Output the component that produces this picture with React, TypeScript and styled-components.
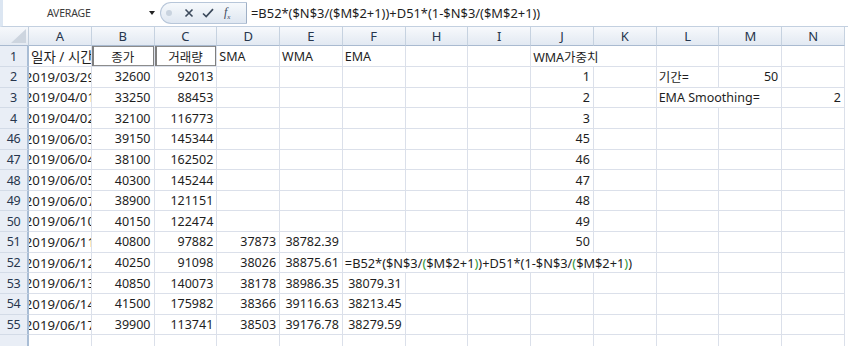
import React from "react";
import styled, { createGlobalStyle } from "styled-components";

const GlobalStyle = createGlobalStyle`
  html, body { margin: 0; padding: 0; background: #ffffff; }
  body { font-family: "Noto Sans", "Noto Sans CJK KR", sans-serif; }
`;

const COLS = ["A", "B", "C", "D", "E", "F", "H", "I", "J", "K", "L", "M", "N"];
const FORMULA = "=B52*($N$3/($M$2+1))+D51*(1-$N$3/($M$2+1))";

type Align = "left" | "right" | "center";
type CellDef = { v: React.ReactNode; align?: Align; span?: number; boxed?: boolean; size?: number };
type RowDef = { n: string; cells: Record<string, CellDef | string> };

const Paren = styled.span`
  color: #2f9a3c;
`;

const coloredFormula = (
  <>
    =B52*($N$3/<Paren>(</Paren>$M$2+1<Paren>)</Paren>)+D51*(1-$N$3/<Paren>(</Paren>$M$2+1<Paren>)</Paren>)
  </>
);

const rows: RowDef[] = [
  {
    n: "1",
    cells: {
      A: { v: "일자 / 시간", align: "left", size: 13.5 },
      B: { v: "종가", align: "center", boxed: true },
      C: { v: "거래량", align: "center", boxed: true },
      D: "SMA",
      E: "WMA",
      F: "EMA",
      J: { v: "WMA가중치", align: "left", span: 2 },
    },
  },
  { n: "2", cells: { A: "2019/03/29", B: "32600", C: "92013", J: "1", L: "기간=", M: "50" } },
  { n: "3", cells: { A: "2019/04/01", B: "33250", C: "88453", J: "2", L: { v: "EMA Smoothing=", span: 2 }, N: "2" } },
  { n: "4", cells: { A: "2019/04/02", B: "32100", C: "116773", J: "3" } },
  { n: "46", cells: { A: "2019/06/03", B: "39150", C: "145344", J: "45" } },
  { n: "47", cells: { A: "2019/06/04", B: "38100", C: "162502", J: "46" } },
  { n: "48", cells: { A: "2019/06/05", B: "40300", C: "145244", J: "47" } },
  { n: "49", cells: { A: "2019/06/07", B: "38900", C: "121151", J: "48" } },
  { n: "50", cells: { A: "2019/06/10", B: "40150", C: "122474", J: "49" } },
  { n: "51", cells: { A: "2019/06/11", B: "40800", C: "97882", D: "37873", E: "38782.39", J: "50" } },
  {
    n: "52",
    cells: {
      A: "2019/06/12",
      B: "40250",
      C: "91098",
      D: "38026",
      E: "38875.61",
      F: { v: coloredFormula, align: "left", span: 5, size: 12.8 },
    },
  },
  { n: "53", cells: { A: "2019/06/13", B: "40850", C: "140073", D: "38178", E: "38986.35", F: "38079.31" } },
  { n: "54", cells: { A: "2019/06/14", B: "41500", C: "175982", D: "38366", E: "39116.63", F: "38213.45" } },
  { n: "55", cells: { A: "2019/06/17", B: "39900", C: "113741", D: "38503", E: "39176.78", F: "38279.59" } },
  { n: "", cells: {} },
];

function normalize(col: string, c: CellDef | string): CellDef {
  if (typeof c !== "string") return c;
  if (col === "A") return { v: c, align: "center", size: 13.2 };
  return { v: c, align: /^[\d.]+$/.test(c) ? "right" : "left" };
}

function App() {
  return (
    <>
      <GlobalStyle />
      <Window>
        <FormulaBar>
          <NameBox>AVERAGE</NameBox>
          <DropArrow />
          <ButtonPill>
            <GhostDot />
            <PillIcon>
              <svg width="10" height="10" viewBox="0 0 10 10">
                <path d="M1.5 1.5 L8.5 8.5 M8.5 1.5 L1.5 8.5" stroke="#3c4a5c" strokeWidth="1.6" />
              </svg>
            </PillIcon>
            <PillIcon>
              <svg width="12" height="10" viewBox="0 0 12 10">
                <path d="M1 5.5 L4.2 8.5 L11 1.2" stroke="#3c4a5c" strokeWidth="1.7" fill="none" />
              </svg>
            </PillIcon>
            <FxLabel>
              f<sub>x</sub>
            </FxLabel>
          </ButtonPill>
          <FormulaText>{FORMULA}</FormulaText>
        </FormulaBar>

        <Sheet>
          <Corner>
            <CornerTriangle />
          </Corner>
          {COLS.map((c) => (
            <ColHead key={c}>{c}</ColHead>
          ))}

          {rows.map((row, ri) => {
            const out: React.ReactNode[] = [<RowHead key={`h${ri}`}>{row.n}</RowHead>];
            let skip = 0;
            COLS.forEach((col) => {
              if (skip > 0) {
                skip--;
                return;
              }
              const raw = row.cells[col];
              if (!raw) {
                out.push(<Cell key={`${ri}${col}`} $align="left" />);
                return;
              }
              const def = normalize(col, raw);
              const span = def.span ?? 1;
              skip = span - 1;
              out.push(
                <Cell key={`${ri}${col}`} $align={def.align ?? "left"} $span={span} $boxed={def.boxed}>
                  <CellText $size={def.size}>{def.v}</CellText>
                </Cell>
              );
            });
            return out;
          })}
        </Sheet>
      </Window>
    </>
  );
}

const Window = styled.div`
  width: 848px;
  height: 346px;
  overflow: hidden;
  background: #ffffff;
  color: #1e1e1e;
`;

const FormulaBar = styled.div`
  height: 27px;
  display: flex;
  align-items: center;
  border-left: 3px solid #dce6f2;
  border-bottom: 1px solid #c3d0e0;
  box-sizing: border-box;
  background: #ffffff;
`;

const NameBox = styled.div`
  width: 144px;
  padding-left: 44px;
  box-sizing: border-box;
  font-size: 10.5px;
  letter-spacing: -0.2px;
  color: #3a3a3a;
`;

const DropArrow = styled.div`
  width: 0;
  height: 0;
  margin-left: 2px;
  border-left: 3px solid transparent;
  border-right: 3px solid transparent;
  border-top: 4px solid #222;
`;

const ButtonPill = styled.div`
  margin-left: 5px;
  width: 87px;
  height: 22px;
  box-sizing: border-box;
  display: flex;
  align-items: center;
  gap: 8px;
  padding-left: 5px;
  border: 1px solid #b7c6d9;
  border-right-color: #9fb0c6;
  border-radius: 12px 0 0 12px;
  background: linear-gradient(#f6f9fc, #dfe7f1);
`;

const GhostDot = styled.div`
  width: 6px;
  height: 6px;
  border-radius: 50%;
  background: #c9d3df;
  margin-right: 4px;
`;

const PillIcon = styled.div`
  display: flex;
  align-items: center;
`;

const FxLabel = styled.div`
  font-family: "Liberation Serif", serif;
  font-style: italic;
  font-size: 12px;
  color: #3c4a5c;
  margin-left: 2px;
  sub {
    font-size: 7px;
  }
`;

const FormulaText = styled.div`
  margin-left: 4px;
  font-size: 12.9px;
  white-space: nowrap;
  color: #1e1e1e;
`;

const Sheet = styled.div`
  display: grid;
  grid-template-columns: 29px repeat(13, 62.77px);
  grid-template-rows: 19px 21px repeat(13, 20.65px) 20px;
  font-size: 12.5px;
`;

const Corner = styled.div`
  position: relative;
  background: linear-gradient(#f6f8fb, #e4eaf2);
  border-right: 1px solid #c3cfdd;
  border-bottom: 1px solid #a9bad0;
  box-sizing: border-box;
`;

const CornerTriangle = styled.div`
  position: absolute;
  right: 2px;
  bottom: 2px;
  width: 0;
  height: 0;
  border-left: 15px solid transparent;
  border-bottom: 14px solid #cdd5df;
`;

const ColHead = styled.div`
  display: flex;
  align-items: center;
  justify-content: center;
  box-sizing: border-box;
  background: linear-gradient(#f7f9fc, #e2e9f2);
  border-right: 1px solid #c6d2e0;
  border-bottom: 1px solid #a9bad0;
  color: #27364d;
  font-size: 13px;
`;

const RowHead = styled.div`
  display: flex;
  align-items: center;
  justify-content: center;
  box-sizing: border-box;
  background: #e9eef6;
  border-right: 2px solid #a9bdd5;
  border-bottom: 1px solid #d3dbe7;
  color: #27364d;
  font-size: 12.5px;
  letter-spacing: -0.3px;
`;

const Cell = styled.div<{ $align: Align; $span?: number; $boxed?: boolean }>`
  grid-column: span ${(p) => p.$span ?? 1};
  display: flex;
  align-items: center;
  justify-content: ${(p) => (p.$align === "right" ? "flex-end" : p.$align === "center" ? "center" : "flex-start")};
  padding: 0 ${(p) => (p.$align === "right" ? "3px" : "0")} 0 ${(p) => (p.$align === "left" ? "2px" : "0")};
  box-sizing: border-box;
  overflow: hidden;
  white-space: nowrap;
  border-right: 1px solid #dbe0ea;
  border-bottom: 1px solid #dbe0ea;
  box-shadow: ${(p) =>
    p.$boxed ? "inset 2px 0 #7f7f7f, inset -1px 0 #7f7f7f, inset 0 1px #8c8c8c, inset 0 -1px #8c8c8c" : "none"};
`;

const CellText = styled.span<{ $size?: number }>`
  flex-shrink: 0;
  font-size: ${(p) => (p.$size ? `${p.$size}px` : "inherit")};
`;

export default App;
